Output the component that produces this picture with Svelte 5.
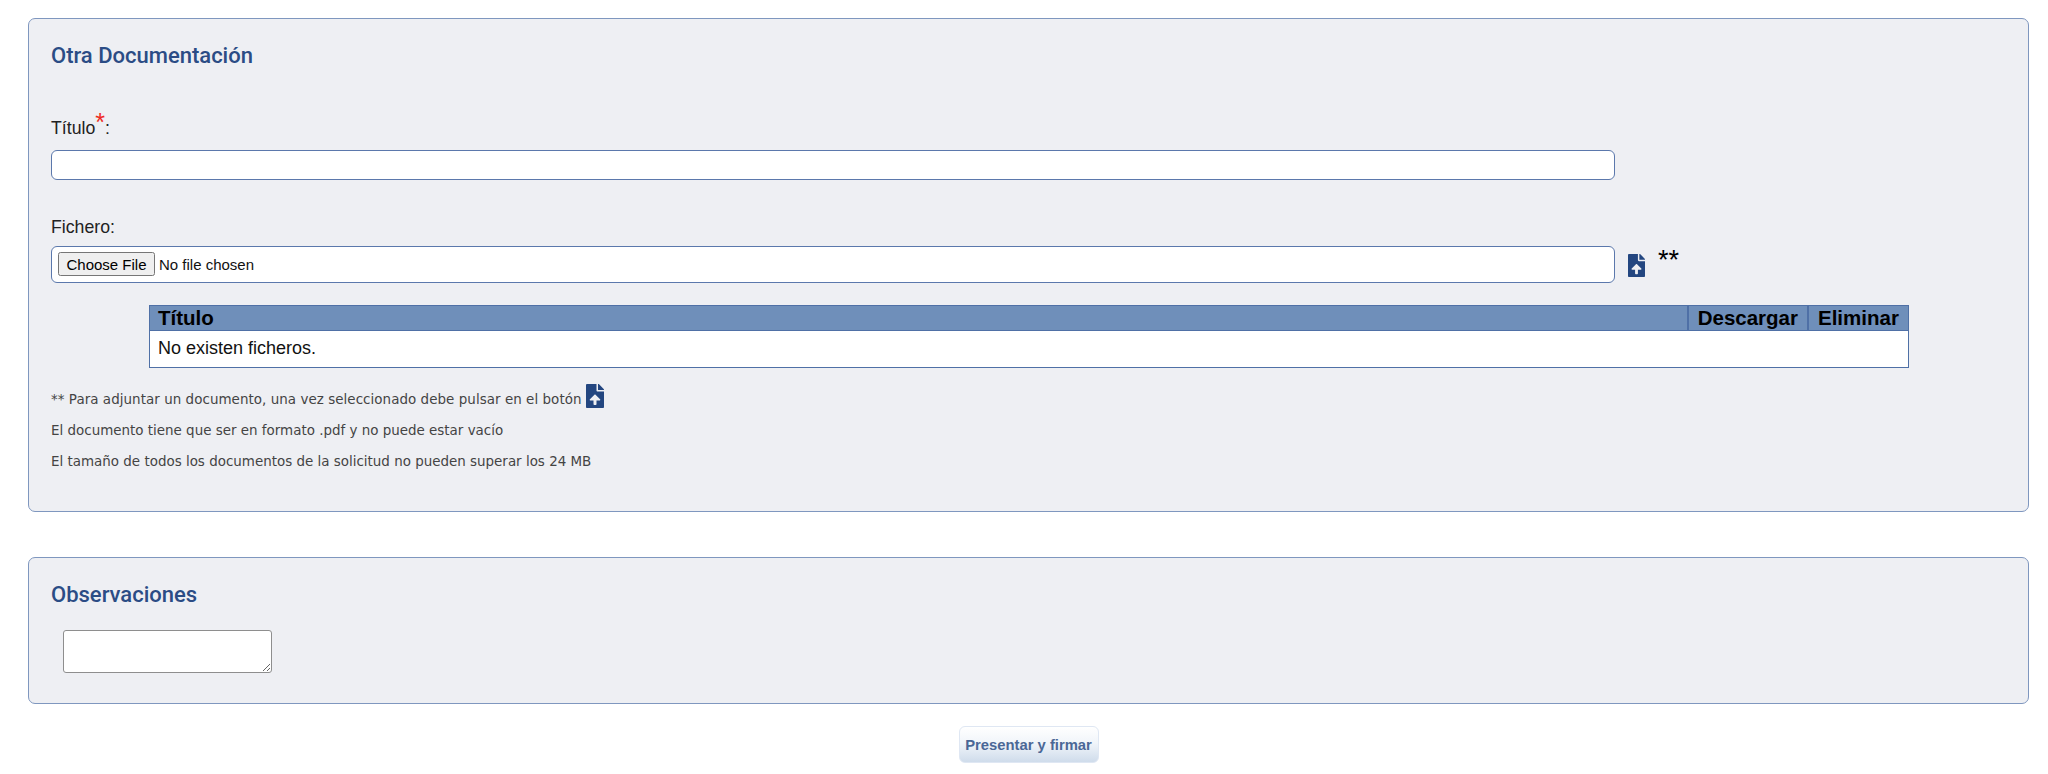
<script>
  // Paso final de la solicitud: documentación adjunta y observaciones
  const notas = [
    'El documento tiene que ser en formato .pdf y no puede estar vacío',
    'El tamaño de todos los documentos de la solicitud no pueden superar los 24 MB'
  ];
</script>

{#snippet uploadIcon(cls)}
  <svg class={cls} viewBox="0 0 384 512" preserveAspectRatio="none" aria-hidden="true">
    <path d="M224 136V0H24C10.700 0 0 10.700 0 24v464c0 13.300 10.700 24 24 24h336c13.300 0 24-10.700 24-24V160H248c-13.200 0-24-10.800-24-24zm65.200 216.100H224v80c0 8.800-7.200 16-16 16h-32c-8.800 0-16-7.200-16-16v-80H94.800c-14.300 0-21.400-17.300-11.300-27.400l96.400-95.700c6.700-6.600 17.400-6.600 24 0l96.400 95.700c10.200 10.100 3.100 27.400-11.100 27.400zM377 105L279.100 7c-4.500-4.500-10.600-7-17-7H256v128h128v-6.100c0-6.300-2.500-12.400-7-16.900z"/>
  </svg>
{/snippet}

<div class="page">
  <section class="panel docs">
    <h2>Otra Documentación</h2>

    <label class="lbl titulo" for="titulo">Título<span class="req">*</span>:</label>
    <input id="titulo" class="campo" type="text" />

    <label class="lbl fichero" for="fichero">Fichero:</label>
    <div class="fila">
      <input id="fichero" class="campo file" type="file" />
      <button class="subir" type="button" aria-label="Adjuntar">{@render uploadIcon('ico')}</button>
      <span class="ast">**</span>
    </div>

    <table>
      <thead>
        <tr>
          <th class="t">Título</th>
          <th class="d">Descargar</th>
          <th class="e">Eliminar</th>
        </tr>
      </thead>
      <tbody>
        <tr><td colspan="3">No existen ficheros.</td></tr>
      </tbody>
    </table>

    <div class="notas">
      <p class="primera">** Para adjuntar un documento, una vez seleccionado debe pulsar en el botón {@render uploadIcon('ico mini')}</p>
      {#each notas as n}
        <p>{n}</p>
      {/each}
    </div>
  </section>

  <section class="panel obs">
    <h2>Observaciones</h2>
    <textarea aria-label="Observaciones"></textarea>
  </section>

  <div class="acciones">
    <button class="presentar" type="button">Presentar y firmar</button>
  </div>
</div>

<style>
  :global(body) { background: #fff; }
  .page { padding: 18px 19px 0 28px; font-family: "Liberation Sans", Arial, sans-serif; color: #111; }
  .panel { background: #eeeff3; border: 1px solid #7f97bf; border-radius: 7px; padding: 0 22px; }
  h2 { margin: 0; font-family: Roboto, sans-serif; font-weight: 500; font-size: 22px; line-height: 28px; letter-spacing: 0; color: #2b4c85; }

  .docs { height: 494px; box-sizing: border-box; padding-top: 23px; }
  .lbl { display: block; font-size: 17.7px; line-height: 20px; color: #222; }
  .titulo { margin-top: 48px; }
  .req { color: #ee2b24; font-size: 25px; line-height: 0; position: relative; top: -3px; }
  .campo { display: block; box-sizing: border-box; width: 1564px; background: #fff; border: 1px solid #5b78ac; border-radius: 6px; margin: 0; }
  #titulo { height: 30px; margin-top: 12px; }
  .fichero { margin-top: 37px; }
  .fila { display: flex; align-items: flex-start; margin-top: 9px; }
  .file { height: 37px; padding: 5px 6px; font-family: "Liberation Sans", Arial, sans-serif; font-size: 15px; }
  .file::file-selector-button { width: 97px; height: 24px; padding: 0; }
  .subir { border: 0; background: none; padding: 0; margin: 8px 0 0 13px; line-height: 0; cursor: pointer; }
  .ico { fill: #234680; width: 17px; height: 23px; }
  .ast { font-size: 27px; line-height: 24px; margin: 2px 0 0 13px; color: #000; }

  table { width: 1760px; margin: 22px 0 0 98px; border-collapse: collapse; background: #fff; border: 1px solid #4f70a6; }
  th { background: #6f8fba; color: #000; font-size: 20.5px; line-height: 24px; font-weight: 700; padding: 0 9px; border-left: 2px solid #4f70a6; border-bottom: 1px solid #4f70a6; text-align: left; }
  th.t { border-left: 0; padding-left: 8px; }
  th.d { width: 100px; }
  th.e { width: 81px; }
  td { padding: 8px 9px 9px 8px; font-size: 18px; line-height: 19px; color: #111; }

  .notas { margin-top: 16px; font-family: "DejaVu Sans", Verdana, sans-serif; font-size: 13.45px; color: #444; }
  .notas p { margin: 0 0 14px; line-height: 17px; }
  .notas .primera { display: flex; align-items: flex-end; gap: 4px; height: 24px; margin-bottom: 14px; letter-spacing: 0.05px; }
  .mini { width: 18px; height: 24px; flex: none; }

  .obs { height: 147px; box-sizing: border-box; margin-top: 45px; padding-top: 23px; }
  textarea { display: block; box-sizing: border-box; width: 209px; height: 43px; margin: 21px 0 0 12px; background: #fff; border: 1px solid #8e8e8e; border-radius: 3px; }

  .acciones { display: flex; justify-content: center; margin-top: 22px; }
  .presentar { width: 140px; height: 37px; padding: 0; border: 1px solid #dfe7f3; border-radius: 6px; background: linear-gradient(#ffffff, #f1f5fa 45%, #cfdceb); color: #4a6796; font-family: "Liberation Sans", Arial, sans-serif; font-size: 14.8px; font-weight: 700; }
</style>
